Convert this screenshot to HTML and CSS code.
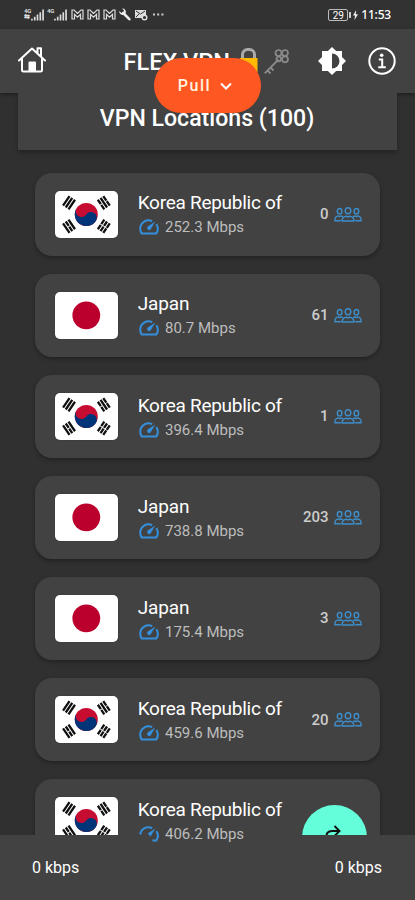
FILE: index.html
```html
<!DOCTYPE html>
<html lang="en">
<head>
<meta charset="utf-8">
<title>FLEX VPN</title>
<link rel="stylesheet" href="styles.css">
</head>
<body>
<svg class="defs" aria-hidden="true">
  <symbol id="gauge" viewBox="0 0 20 16">
    <path d="M13.200 2.100A8.400 8.400 0 0 0 1.200 9.500c0 2 .6 3.800 1.600 5.100h14.400c1.200-1.500 1.700-3.300 1.600-5.100a8.600 8.600 0 0 0-1.500-4.400" fill="none" stroke="#3490dc" stroke-width="2"/>
    <path d="M16.300 2.500 11.600 10.400a2 2 0 1 1-2.900-2.800z" fill="#3490dc"/>
  </symbol>
  <symbol id="gauge-cut" viewBox="0 0 20 16">
    <path d="M13.200 2.100A8.400 8.400 0 0 0 1.200 8.500M17.300 5.100c2.100 3 2 6.700-.1 9.500h-3.800" fill="none" stroke="#3490dc" stroke-width="2"/>
    <path d="M16.300 2.500 11.600 10.400 8.700 7.600z" fill="#3490dc"/>
  </symbol>
  <symbol id="people" viewBox="0 0 28 15">
    <g fill="none" stroke="#3d8ecb" stroke-width="1.400" stroke-linejoin="round">
      <ellipse cx="14" cy="3.700" rx="2.800" ry="3"/>
      <ellipse cx="5.600" cy="4.200" rx="2.300" ry="2.700"/>
      <ellipse cx="22.400" cy="4.200" rx="2.300" ry="2.700"/>
      <path d="M8 14c0-3 1.600-4.300 4.200-4.900 1 .8 2.600.8 3.600 0C18.400 9.700 20 11 20 14z"/>
      <path d="M6.800 13.700H.8c0-2.800 1.100-4.300 3.200-4.800 1 .7 2.200.7 3.200 0l1.800.9M21.200 13.700h6c0-2.800-1.100-4.300-3.200-4.800-1 .7-2.200.7-3.200 0l-1.800.9"/>
    </g>
  </symbol>
  <symbol id="kr" viewBox="0 0 63 47">
    <rect width="63" height="47" fill="#fff"/>
    <circle cx="31.300" cy="23.500" r="11.500" fill="#c60c30"/>
    <path d="M21.700 17.100a5.750 5.750 0 0 0 9.600 6.400 5.750 5.750 0 0 1 9.600 6.400 11.500 11.500 0 1 1-19.200-12.800z" fill="#003478"/>
    <g stroke="#111" stroke-width="2.300">
      <path d="M-5.800-3.300H5.800M-5.800 0H5.800M-5.800 3.300H5.800" transform="translate(14 11.700) rotate(-56)"/>
      <path d="M-5.800-3.300H-.4M.4-3.300H5.800M-5.800 0H5.800M-5.800 3.300H-.4M.4 3.300H5.800" transform="translate(48.800 11.700) rotate(56)"/>
      <path d="M-5.800-3.300H5.800M-5.800 0H-.4M.4 0H5.800M-5.800 3.300H5.800" transform="translate(14 35.300) rotate(56)"/>
      <path d="M-5.800-3.300H-.4M.4-3.300H5.800M-5.800 0H-.4M.4 0H5.800M-5.800 3.300H-.4M.4 3.300H5.800" transform="translate(48.800 35.300) rotate(-56)"/>
    </g>
  </symbol>
  <symbol id="jp" viewBox="0 0 63 47">
    <rect width="63" height="47" fill="#fff"/>
    <circle cx="31.300" cy="23.300" r="13.900" fill="#bc002d"/>
  </symbol>
  <symbol id="signal" viewBox="0 0 14 12">
    <path d="M1 12V10M4 12V8M7 12V5.500M10 12V3M13 12V0" stroke="#ddd" stroke-width="1.800"/>
  </symbol>
  <symbol id="gmail" viewBox="0 0 13 11">
    <path d="M1 10V1h2l3.500 3.500L10 1h2v9H9.500V5.500l-3 2.800-3-2.800V10z" fill="none" stroke="#ddd" stroke-width="1.200"/>
  </symbol>
</svg>

<div class="status">
  <div class="net"><div class="gen"><span>4G</span><small>⇆</small></div><svg width="13" height="12"><use href="#signal"/></svg></div>
  <div class="net net2"><div class="gen"><span>4G</span></div><svg width="13" height="12"><use href="#signal"/></svg></div>
  <svg class="gm" width="13" height="11"><use href="#gmail"/></svg>
  <svg class="gm" width="13" height="11"><use href="#gmail"/></svg>
  <svg class="gm" width="13" height="11"><use href="#gmail"/></svg>
  <svg class="wrench" width="12" height="13" viewBox="0 0 12 13"><path d="M4.200 5 10.300 11.200" stroke="#eee" stroke-width="2.600" stroke-linecap="round"/><path d="M3.200.5a3.500 3.500 0 0 1 3.500 4.800A3.500 3.500 0 0 1 .3 3L2.500 5l2-.5.500-2z" fill="#eee"/></svg>
  <svg width="13" height="12" viewBox="0 0 13 12"><path d="M0 1h11v8H0z" fill="#ddd"/><path d="m1 2 4.500 3L10 2M1 8l3-3" fill="none" stroke="#333"/><circle cx="9.500" cy="8.500" r="2.300" fill="#333" stroke="#ddd" stroke-width="1.500"/></svg>
  <svg class="dots" width="11" height="3"><path d="M0 .5h2v2H0zM4.200.5h2v2h-2zM8.400.5h2v2h-2z" fill="#ccc"/></svg>
  <div class="power">
    <span class="battery">29</span><i></i>
    <svg width="5" height="10" viewBox="0 0 5 10"><path d="M3.200 0 0 5.500h2L1.500 10 5 4.200H2.800z" fill="#eee"/></svg>
    <span class="clock">11:53</span>
  </div>
</div>

<header class="appbar">
  <svg class="home" width="28" height="26" viewBox="0 0 28 26" fill="none" stroke="#fff" stroke-width="2" stroke-linejoin="round" stroke-linecap="round"><path d="M1 13.500 14 1.500l13 12M19.500 6V1.300H23V9.500M4 12v11a1.500 1.500 0 0 0 1.500 1.500h17A1.500 1.500 0 0 0 24 23V12"/><path d="M11.500 24v-8.500h5.500V24z" fill="#fff"/></svg>
  <h1>FLEX VPN</h1>
  <svg class="lock" width="20" height="24" viewBox="0 0 20 24"><path d="M3.500 12V6.500a5 5 0 0 1 5-5h2a5 5 0 0 1 5 5V12" fill="none" stroke="#aaa" stroke-width="3"/><rect x="1" y="10" width="17.500" height="14" fill="#ffb900"/></svg>
  <svg class="key" width="25" height="26" viewBox="0 0 25 26" fill="none" stroke="#8b8b8b"><g stroke-width="1.700"><circle cx="14.500" cy="4" r="3"/><circle cx="21" cy="4" r="3"/><circle cx="21" cy="10.300" r="3"/><circle cx="14.800" cy="10" r="2.300"/></g><path d="M14.500 10.500.7 24.300M3.500 21.500l3 3M6.500 18.500l3 3" stroke-width="1.800"/></svg>
  <svg class="theme" width="28" height="28" viewBox="0 0 28 28"><path d="M14 0 18.100 4H24v5.900L28 14l-4 4.100V24h-5.900L14 28l-4.100-4H4v-5.900L0 14l4-4.100V4h5.900z" fill="#fff"/><path d="M14 6.500a7.500 7.500 0 0 1 0 15z" fill="#424242"/></svg>
  <svg class="info" width="28" height="28" viewBox="0 0 28 28"><circle cx="14" cy="14" r="12.700" fill="none" stroke="#fff" stroke-width="2"/><circle cx="13.700" cy="8.300" r="1.800" fill="#fff"/><path d="M10.800 12.500h3.400v7.500M10.300 20.300h7.500" fill="none" stroke="#fff" stroke-width="2"/></svg>
</header>

<main>
  <h2>VPN Locations (100)</h2>
  <button class="pull"><span>Pull</span><svg width="12" height="8" viewBox="0 0 12 8"><path d="m1 1.500 5 5 5-5" fill="none" stroke="#fff" stroke-width="2"/></svg></button>
  <div class="list">
    <article><svg class="flag"><use href="#kr"/></svg><div class="place"><h3>Korea Republic of</h3><p><svg class="speed"><use href="#gauge"/></svg>252.3 Mbps</p></div><b>0</b><svg class="people"><use href="#people"/></svg></article>
    <article><svg class="flag"><use href="#jp"/></svg><div class="place"><h3 class="short">Japan</h3><p><svg class="speed"><use href="#gauge"/></svg>80.7 Mbps</p></div><b>61</b><svg class="people"><use href="#people"/></svg></article>
    <article><svg class="flag"><use href="#kr"/></svg><div class="place"><h3>Korea Republic of</h3><p><svg class="speed"><use href="#gauge"/></svg>396.4 Mbps</p></div><b>1</b><svg class="people"><use href="#people"/></svg></article>
    <article><svg class="flag"><use href="#jp"/></svg><div class="place"><h3 class="short">Japan</h3><p><svg class="speed"><use href="#gauge"/></svg>738.8 Mbps</p></div><b>203</b><svg class="people"><use href="#people"/></svg></article>
    <article><svg class="flag"><use href="#jp"/></svg><div class="place"><h3 class="short">Japan</h3><p><svg class="speed"><use href="#gauge"/></svg>175.4 Mbps</p></div><b>3</b><svg class="people"><use href="#people"/></svg></article>
    <article><svg class="flag"><use href="#kr"/></svg><div class="place"><h3>Korea Republic of</h3><p><svg class="speed"><use href="#gauge"/></svg>459.6 Mbps</p></div><b>20</b><svg class="people"><use href="#people"/></svg></article>
    <article class="last"><svg class="flag"><use href="#kr"/></svg><div class="place"><h3>Korea Republic of</h3><p><svg class="speed"><use href="#gauge-cut"/></svg>406.2 Mbps</p></div></article>
  </div>
</main>

<div class="fab"><svg width="16" height="18" viewBox="0 0 16 18"><path d="M1 16V13q0-7 6-7h7M9.500 1 14.500 6l-5 5" fill="none" stroke="#111" stroke-width="1.900"/></svg></div>
<footer><span>0 kbps</span><span>0 kbps</span></footer>
</body>
</html>
```
FILE: styles.css
```css
* { box-sizing: border-box; margin: 0; padding: 0; }
html, body { height: 900px; overflow: hidden; }
body { width: 415px; background: #303030; color: #fff; font-family: Roboto, sans-serif; position: relative; }
svg { display: block; flex: none; }
.defs { position: absolute; width: 0; height: 0; }

.status { height: 29px; display: flex; align-items: center; padding-left: 24px; background: #323232; }
.net { display: flex; align-items: flex-end; height: 12px; width: 23px; }
.net2 { width: 24px; }
.gen { width: 7px; height: 13px; font: 700 6px/6px Roboto, sans-serif; letter-spacing: -.3px; color: #ddd; }
.gen span, .gen small { display: block; }
.gen small { font-size: 7px; }
.gm { margin-right: 3px; }
.wrench { margin-right: 4px; }
.dots { margin-left: 5px; }
.power { display: flex; align-items: center; margin-left: auto; padding-right: 24px; }
.battery { width: 20px; height: 12px; border: 1px solid #bbb; border-radius: 2px; font: 10px/11px Roboto, sans-serif; text-align: center; }
.power i { width: 2px; height: 6px; background: #ccc; margin: 0 2px 0 1px; }
.clock { font: 500 12px/14px "Noto Sans", sans-serif; letter-spacing: -.2px; margin-left: 3px; padding-top: 1px; }

.appbar { height: 64px; background: #424242; display: flex; align-items: flex-start; padding: 17px 19px 0 18px; box-shadow: 0 2px 4px rgba(0,0,0,.35); }
.home { margin-top: 1px; }
.appbar h1 { font-size: 23.500px; line-height: 32px; font-weight: 500; width: 115px; margin-left: 77.500px; white-space: nowrap; }
.lock { margin-top: 2px; }
.key { margin: 3px 0 0 5px; }
.theme { margin-left: 29px; margin-top: 1px; }
.info { margin-left: auto; margin-top: 1px; }

main { position: relative; }
h2 { width: 379px; height: 57px; margin-left: 18px; background: #424242; font-size: 23.100px; line-height: 52px; font-weight: 500; text-align: center; position: relative; padding-right: 1px; box-shadow: 0 3px 4px rgba(0,0,0,.25); }
.pull { position: absolute; left: 154px; top: -35.500px; width: 107px; height: 55px; border: 0; border-radius: 28px; background: #ff5722; color: #fff2df; font: 500 16px/20px Roboto, sans-serif; letter-spacing: 1.500px; display: flex; align-items: center; justify-content: center; gap: 9px; padding: 1px 5px 0 0; }
.list { padding: 22.600px 35px 0; display: flex; flex-direction: column; gap: 18.100px; }
article { height: 83px; border-radius: 17px; background: #424242; display: flex; align-items: center; padding: 0 18.500px 0 20px; box-shadow: 0 2px 4px rgba(0,0,0,.3); }
.flag { width: 63px; height: 47px; border-radius: 5px; box-shadow: 0 0 1px #222; }
.place { margin-left: 19.700px; flex: 1; padding-top: 2.600px; }
h3 { font-size: 19px; line-height: 24px; font-weight: 400; letter-spacing: -.27px; white-space: nowrap; }
.short { letter-spacing: -.1px; }
.place p { font-size: 15px; line-height: 24px; color: #bdbdbd; display: flex; align-items: center; }
.speed { width: 20px; height: 16px; margin: 0 6.300px 0 1px; }
article b { font-size: 15px; font-weight: 500; color: #ccc; margin-right: 5px; }
.people { width: 28px; height: 15px; }
.last .place { position: relative; z-index: 3; }

footer { position: absolute; left: 0; top: 835px; z-index: 2; width: 415px; height: 65px; background: #424242; display: flex; justify-content: space-between; align-items: center; padding: 0 33px 0 32px; font-size: 16px; }
.fab { position: absolute; left: 302px; top: 805px; z-index: 1; width: 65px; height: 65px; border-radius: 50%; background: #64ffda; display: flex; justify-content: center; padding: 20px 3px 0 0; }
```
